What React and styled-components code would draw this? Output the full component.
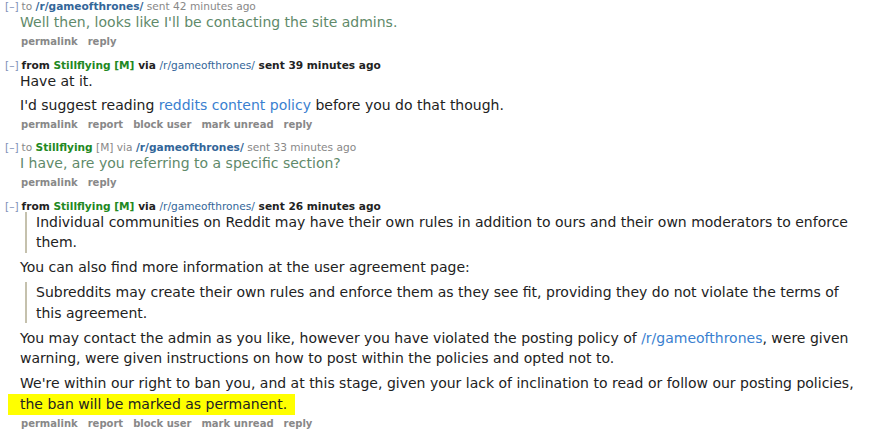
import React from "react";
import styled, { createGlobalStyle } from "styled-components";

const Global = createGlobalStyle`
  html, body { margin: 0; padding: 0; background: #fff; }
  body { font-family: "DejaVu Sans", Verdana, sans-serif; }
`;

const Page = styled.div`
  padding: 1px 0 0 5px;
  width: 862px;
`;

const Message = styled.div`
  margin-bottom: 10.5px;
`;

const Tagline = styled.div`
  font-size: 10.6px;
  line-height: 11px;
  color: ${(p) => (p.$unread ? "#222" : "#888")};
  font-weight: ${(p) => (p.$unread ? "bold" : "normal")};
  white-space: nowrap;
`;

const Toggle = styled.span`
  color: #8090b8;
  font-weight: normal;
  margin-right: 3px;
`;

const User = styled.span`
  color: #228822;
  font-weight: bold;
`;

const Mod = styled.span`
  color: ${(p) => (p.$unread ? "#228822" : "#888")};
  font-weight: ${(p) => (p.$unread ? "bold" : "normal")};
`;

const Sub = styled.span`
  color: #336699;
  font-weight: ${(p) => (p.$bold ? "bold" : "normal")};
`;

const Body = styled.div`
  margin-left: 15px;
  font-size: 14px;
  line-height: 20.5px;
  color: ${(p) => (p.$sent ? "#5f8a6a" : "#222")};
`;

const P = styled.p`
  margin: 0 0 ${(p) => p.$mb ?? 4.5}px 0;
`;

const Quote = styled.blockquote`
  margin: 0 0 4.5px 5px;
  padding: 0 8px 0 9px;
  border-left: 2px solid #c5c1ad;
`;

const Link = styled.a`
  color: #3a7fd0;
  text-decoration: none;
`;

const Mark = styled.span`
  background: #ffff00;
  padding: 2px 8px 3px 12px;
  margin-left: -12px;
`;

const Buttons = styled.ul`
  list-style: none;
  margin: 2.5px 0 0 16px;
  padding: 0;
  display: flex;
  gap: 10px;
  font-size: 10px;
  line-height: 14px;
  font-weight: bold;
`;

const Btn = styled.li`
  color: #888;
`;

const ButtonRow = ({ full }) => (
  <Buttons>
    <Btn>permalink</Btn>
    {full && <Btn>report</Btn>}
    {full && <Btn>block user</Btn>}
    {full && <Btn>mark unread</Btn>}
    <Btn>reply</Btn>
  </Buttons>
);

export default function App() {
  return (
    <>
      <Global />
      <Page>
        <Message>
          <Tagline>
            <Toggle>[–]</Toggle>to <Sub $bold>/r/gameofthrones/</Sub> sent 42 minutes ago
          </Tagline>
          <Body $sent>
            <P $mb={0}>Well then, looks like I'll be contacting the site admins.</P>
          </Body>
          <ButtonRow />
        </Message>

        <Message>
          <Tagline $unread>
            <Toggle>[–]</Toggle>from <User>Stillflying</User> <Mod $unread>[M]</Mod> via{" "}
            <Sub>/r/gameofthrones/</Sub> sent 39 minutes ago
          </Tagline>
          <Body>
            <P $mb={3.5}>Have at it.</P>
            <P $mb={0}>
              I'd suggest reading <Link>reddits content policy</Link> before you do that though.
            </P>
          </Body>
          <ButtonRow full />
        </Message>

        <Message>
          <Tagline>
            <Toggle>[–]</Toggle>to <User>Stillflying</User> <Mod>[M]</Mod> via{" "}
            <Sub $bold>/r/gameofthrones/</Sub> sent 33 minutes ago
          </Tagline>
          <Body $sent>
            <P $mb={0}>I have, are you referring to a specific section?</P>
          </Body>
          <ButtonRow />
        </Message>

        <Message>
          <Tagline $unread>
            <Toggle>[–]</Toggle>from <User>Stillflying</User> <Mod $unread>[M]</Mod> via{" "}
            <Sub>/r/gameofthrones/</Sub> sent 26 minutes ago
          </Tagline>
          <Body>
            <Quote>
              <P $mb={0}>
                Individual communities on Reddit may have their own rules in addition to ours and
                their own moderators to enforce them.
              </P>
            </Quote>
            <P>You can also find more information at the user agreement page:</P>
            <Quote>
              <P $mb={0}>
                Subreddits may create their own rules and enforce them as they see fit, providing
                they do not violate the terms of this agreement.
              </P>
            </Quote>
            <P>
              You may contact the admin as you like, however you have violated the posting policy
              of <Link>/r/gameofthrones</Link>, were given warning, were given instructions on how
              to post within the policies and opted not to.
            </P>
            <P $mb={0}>
              We're within our right to ban you, and at this stage, given your lack of inclination
              to read or follow our posting policies, <Mark>the ban will be marked as permanent.</Mark>
            </P>
          </Body>
          <ButtonRow full />
        </Message>
      </Page>
    </>
  );
}
